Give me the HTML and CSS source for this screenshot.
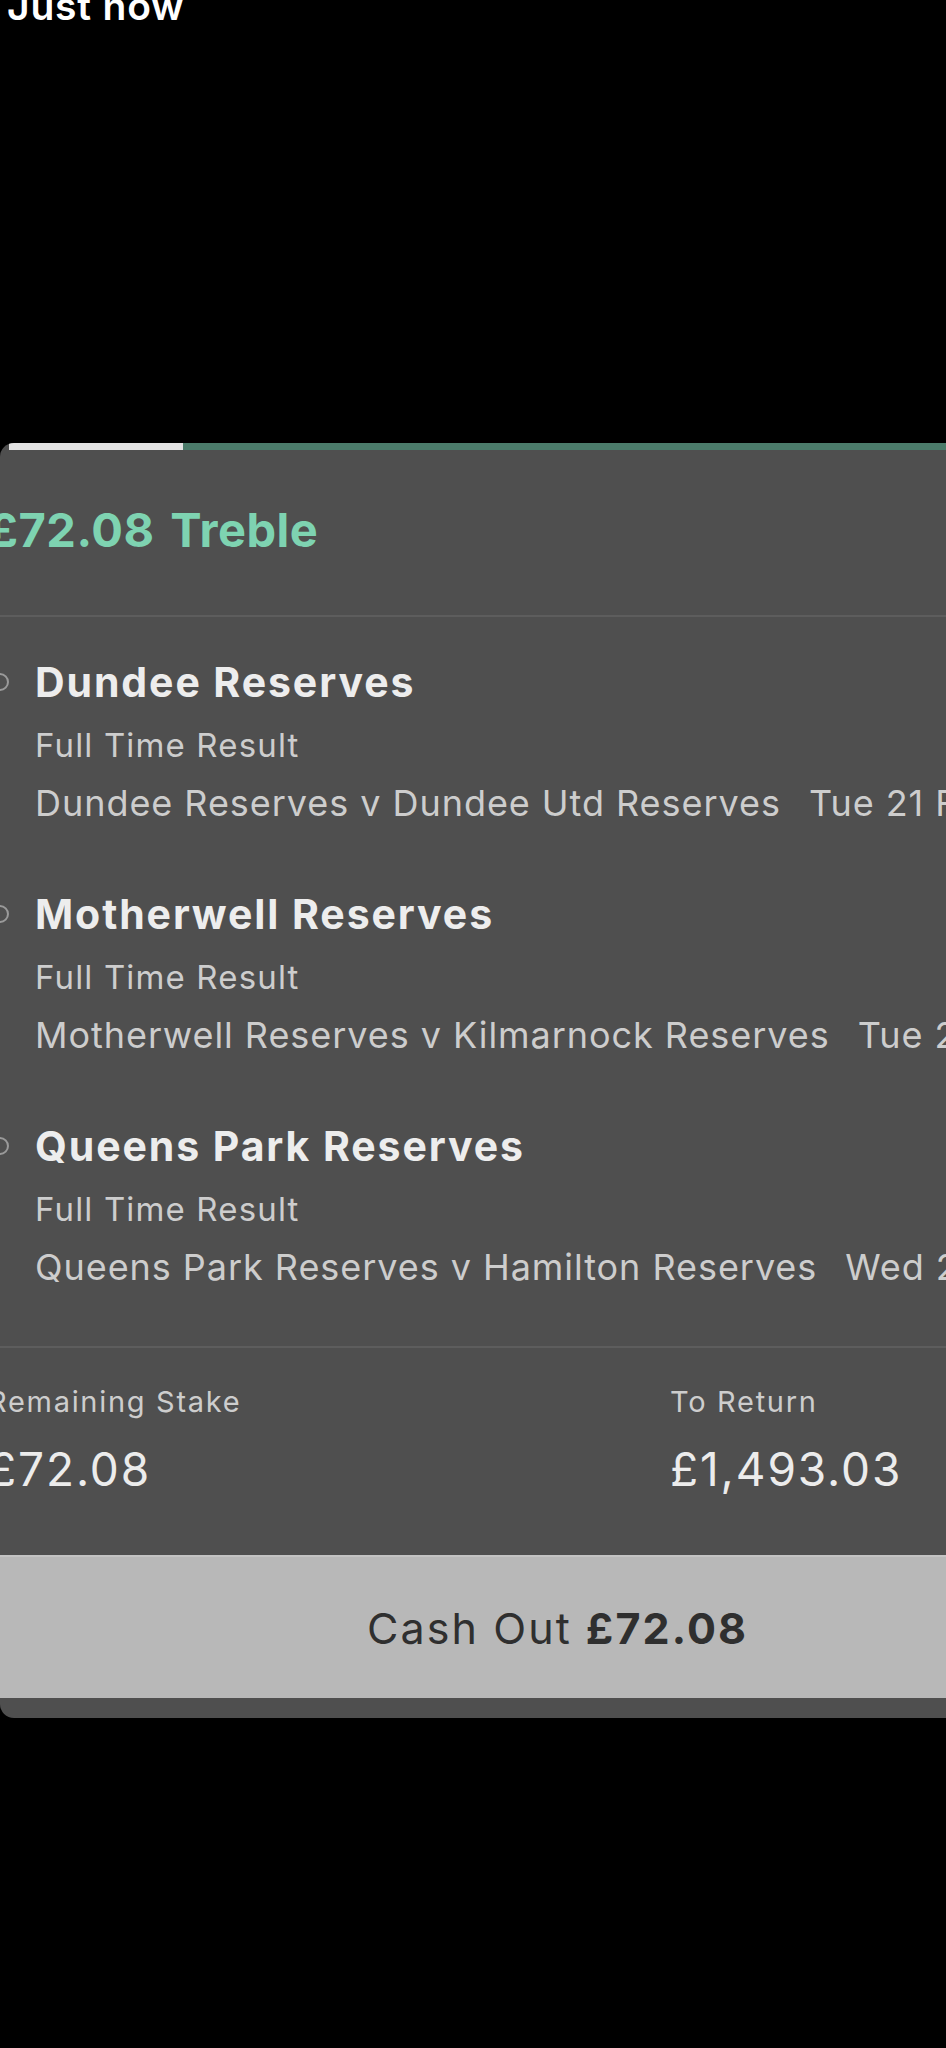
FILE: index.html
```html
<!DOCTYPE html>
<html lang="en">
<head>
<meta charset="utf-8">
<title>Bet</title>
<link rel="stylesheet" href="styles.css">
</head>
<body>
<div class="screen">
  <div class="top">
    <div class="just-now">Just now</div>
  </div>
  <div class="card-clip">
    <div class="card">
      <div class="progress"><div class="seg-done"></div><div class="seg-rest"></div></div>
      <div class="header">
        <div class="bet-title"><span class="amt">£72.08</span> <span>Treble</span></div>
      </div>
      <div class="selections">
        <div class="selection">
          <div class="sel-row">
            <span class="radio"></span>
            <div class="sel-body">
              <div class="sel-name">Dundee Reserves</div>
              <div class="sel-market">Full Time Result</div>
              <div class="sel-event"><span>Dundee Reserves v Dundee Utd Reserves</span><span class="date">Tue 21 Feb</span></div>
            </div>
          </div>
        </div>
        <div class="selection">
          <div class="sel-row">
            <span class="radio"></span>
            <div class="sel-body">
              <div class="sel-name">Motherwell Reserves</div>
              <div class="sel-market">Full Time Result</div>
              <div class="sel-event"><span>Motherwell Reserves v Kilmarnock Reserves</span><span class="date">Tue 21 Feb</span></div>
            </div>
          </div>
        </div>
        <div class="selection">
          <div class="sel-row">
            <span class="radio"></span>
            <div class="sel-body">
              <div class="sel-name">Queens Park Reserves</div>
              <div class="sel-market">Full Time Result</div>
              <div class="sel-event"><span>Queens Park Reserves v Hamilton Reserves</span><span class="date">Wed 22 Feb</span></div>
            </div>
          </div>
        </div>
      </div>
      <div class="stake">
        <div class="stake-col">
          <div class="stake-label">Remaining Stake</div>
          <div class="stake-value">£72.08</div>
        </div>
        <div class="stake-col">
          <div class="stake-label">To Return</div>
          <div class="stake-value">£1,493.03</div>
        </div>
      </div>
      <div class="cashout">
        <span class="co-label">Cash Out</span><span class="co-amt">£72.08</span>
      </div>
    </div>
  </div>
</div>
</body>
</html>
```

FILE: styles.css
```css
html, body {
  margin: 0;
  padding: 0;
  background: #000;
  overflow: hidden;
}
body {
  font-family: Inter, "Liberation Sans", sans-serif;
  width: 946px;
  height: 2048px;
}
.screen {
  width: 946px;
  height: 2048px;
  overflow: hidden;
  background: #000;
}
.top {
  height: 443px;
  display: flow-root;
  overflow: hidden;
}
.just-now {
  margin-top: -13px;
  margin-left: 7px;
  font-size: 39px;
  line-height: 38px;
  font-weight: 600;
  color: #fff;
  letter-spacing: 0.8px;
}
.card-clip {
  width: 946px;
  overflow: hidden;
}
.card {
  width: 1115px;
  background: #4f4f4f;
  border-radius: 14px;
  overflow: hidden;
  padding-bottom: 20px;
}
.progress {
  display: flex;
  height: 7px;
  padding-left: 9px;
}
.seg-done {
  width: 174px;
  background: #e3e3e3;
}
.seg-rest {
  flex: 1;
  background: #4b7b6a;
}
.header {
  padding: 52px 0 57px;
  border-bottom: 2px solid #5d5d5d;
}
.bet-title {
  margin-left: -12px;
  font-size: 47px;
  line-height: 56px;
  font-weight: 700;
  color: #7ed3b1;
  letter-spacing: 0.5px;
}
.bet-title .amt {
  margin-right: 4px;
}
.selections {
  padding: 40px 0 57px;
  border-bottom: 2px solid #5d5d5d;
  display: flex;
  flex-direction: column;
  gap: 64px;
}
.sel-row {
  display: flex;
  align-items: flex-start;
  margin-left: -9px;
  gap: 26px;
}
.radio {
  flex: none;
  box-sizing: border-box;
  width: 18px;
  height: 18px;
  margin-top: 16px;
  border: 2px solid #9a9a9a;
  border-radius: 50%;
}
.sel-body {
  display: flex;
  flex-direction: column;
}
.sel-name {
  font-size: 41px;
  line-height: 50px;
  font-weight: 700;
  color: #ededed;
  letter-spacing: 1.9px;
}
.sel-market {
  margin-top: 18px;
  font-size: 33px;
  line-height: 40px;
  color: #cdcdcd;
  letter-spacing: 1.15px;
}
.sel-event {
  margin-top: 16px;
  font-size: 36px;
  line-height: 44px;
  color: #cdcdcd;
  white-space: nowrap;
  display: flex;
  gap: 28px;
  letter-spacing: 0.95px;
}
.stake {
  display: grid;
  grid-template-columns: 682px 1fr;
  margin-left: -12px;
  padding: 36px 0 59px;
}
.stake-label {
  font-size: 29px;
  line-height: 36px;
  color: #cdcdcd;
  letter-spacing: 1.7px;
}
.stake-value {
  margin-top: 22px;
  font-size: 46px;
  line-height: 54px;
  color: #ececec;
  letter-spacing: 1.9px;
}
.cashout {
  height: 141px;
  background: #b8b8b8;
  border-top: 2px solid #c3c3c3;
  display: flex;
  align-items: center;
  justify-content: center;
  gap: 14px;
  font-size: 43px;
  line-height: 52px;
  color: #2f2f2f;
  letter-spacing: 2.1px;
}
.co-amt {
  font-weight: 700;
}
```
